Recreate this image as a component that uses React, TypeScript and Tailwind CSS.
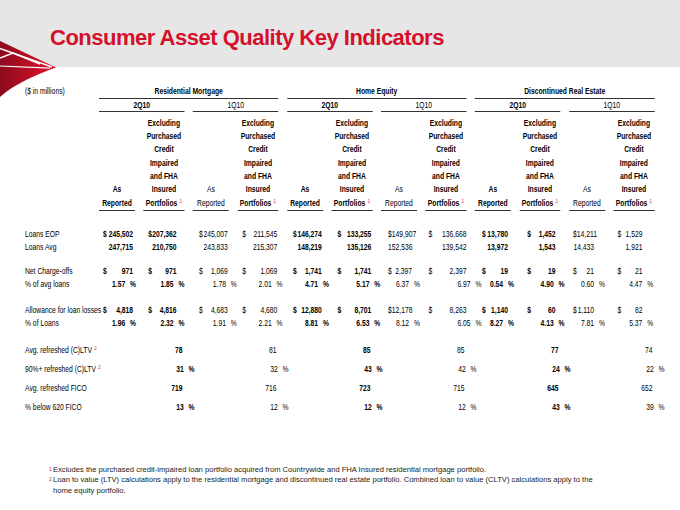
import React from "react";

const SANS = "font-['Liberation_Sans',Arial,sans-serif]";
// the slide uses a condensed face; the table block is squeezed horizontally to match,
// so every px below is in the un-squeezed space (page px × 4/3)
const GRID = "grid grid-cols-[87.33px_repeat(6,48px_54.67px)] gap-x-[11.33px]";

type Col = { pl: string; num: string; pct: string };

// per-column nudges so figures sit where the slide puts them
const COLS: Col[] = [
  { pl: "pl-[5.5px]", num: "pr-[2.5px]", pct: "mr-[-1.5px]" },
  { pl: "pl-[6.5px]", num: "pr-[10.5px]", pct: "mr-0" },
  { pl: "pl-[8px]", num: "pr-[1.5px]", pct: "mr-[-10.5px]" },
  { pl: "pl-[6.5px]", num: "pr-[1.5px]", pct: "mr-[-5.5px]" },
  { pl: "pl-[8px]", num: "pr-[1.5px]", pct: "mr-[-8px]" },
  { pl: "pl-[8px]", num: "pr-[1.5px]", pct: "mr-[-10.5px]" },
  { pl: "pl-[9.5px]", num: "pr-[6.5px]", pct: "mr-[-4px]" },
  { pl: "pl-[4px]", num: "pr-0", pct: "mr-[-20px]" },
  { pl: "pl-[9.5px]", num: "pr-[4px]", pct: "mr-[-4px]" },
  { pl: "pl-[10.5px]", num: "pr-[6.5px]", pct: "mr-[-5.5px]" },
  { pl: "pl-[5.5px]", num: "pr-[14.5px]", pct: "mr-0" },
  { pl: "pl-[5.5px]", num: "pr-[16px]", pct: "mr-[1.5px]" },
];

const isBold = (i: number) => i % 4 < 2;

type DataRow = { label: string; values: string[]; kind: "money" | "plain" | "pct" };

const SECTIONS: DataRow[][] = [
  [
    {
      label: "Loans EOP",
      kind: "money",
      values: ["245,502", "207,362", "245,007", "211,545", "146,274", "133,255", "149,907", "136,668", "13,780", "1,452", "14,211", "1,529"],
    },
    {
      label: "Loans Avg",
      kind: "plain",
      values: ["247,715", "210,750", "243,833", "215,307", "148,219", "135,126", "152,536", "139,542", "13,972", "1,543", "14,433", "1,921"],
    },
  ],
  [
    {
      label: "Net Charge-offs",
      kind: "money",
      values: ["971", "971", "1,069", "1,069", "1,741", "1,741", "2,397", "2,397", "19", "19", "21", "21"],
    },
    {
      label: "% of avg loans",
      kind: "pct",
      values: ["1.57", "1.85", "1.78", "2.01", "4.71", "5.17", "6.37", "6.97", "0.54", "4.90", "0.60", "4.47"],
    },
  ],
  [
    {
      label: "Allowance for loan losses",
      kind: "money",
      values: ["4,818", "4,816", "4,683", "4,680", "12,880", "8,701", "12,178", "8,263", "1,140", "60", "1,110", "82"],
    },
    {
      label: "% of Loans",
      kind: "pct",
      values: ["1.96", "2.32", "1.91", "2.21", "8.81", "6.53", "8.12", "6.05", "8.27", "4.13", "7.81", "5.37"],
    },
  ],
];

const STATS: { label: string; note?: string; pct: boolean; values: string[] }[] = [
  { label: "Avg. refreshed (C)LTV", note: "2", pct: false, values: ["78", "81", "85", "85", "77", "74"] },
  { label: "90%+ refreshed (C)LTV", note: "2", pct: true, values: ["31", "32", "43", "42", "24", "22"] },
  { label: "Avg. refreshed FICO", pct: false, values: ["719", "716", "723", "715", "645", "652"] },
  { label: "% below 620 FICO", pct: true, values: ["13", "12", "12", "12", "43", "39"] },
];

function Sup({ n }: { n: string }) {
  return <sup className="ml-[3px] text-[6px] font-normal text-[#e31837]">{n}</sup>;
}

function Logo() {
  return (
    <svg className="absolute left-0 top-0" width="60" height="100" viewBox="0 0 60 100">
      <defs>
        <linearGradient id="flag" x1="0" x2="1" y1="0" y2="0">
          <stop offset="0" stopColor="#8c0a1c" />
          <stop offset="1" stopColor="#e3132f" />
        </linearGradient>
      </defs>
      <path d="M0 41 L56 67.5 C38 74 14 84 0 97 Z" fill="url(#flag)" />
      <path d="M0 48.5 L52 67" stroke="#fff" strokeWidth="1.4" fill="none" />
      <path d="M0 58 L13 53 L40 64" stroke="#fff" strokeWidth="1.4" fill="none" />
      <path d="M0 66 L50 68.2" stroke="#fff" strokeWidth="1.2" fill="none" />
    </svg>
  );
}

function HeaderCell({ index }: { index: number }) {
  const excl = index % 2 === 1;
  const bold = excl || isBold(index);
  const lines = excl
    ? ["Excluding", "Purchased", "Credit", "Impaired", "and FHA", "Insured"]
    : ["As"];
  return (
    <div
      className={`flex flex-col items-center justify-end border-b border-[#333] text-center leading-[13.33px] ${
        bold ? "font-bold" : ""
      }`}
    >
      {lines.map((l) => (
        <div key={l} className="whitespace-nowrap">
          {l}
        </div>
      ))}
      <div className="whitespace-nowrap">
        {excl ? (
          <>
            Portfolios
            <Sup n="1" />
          </>
        ) : (
          "Reported"
        )}
      </div>
    </div>
  );
}

function ValueCell({ kind, value, index }: { kind: DataRow["kind"]; value: string; index: number }) {
  const col = COLS[index];
  const weight = isBold(index) ? "font-bold" : "";
  if (kind === "pct") {
    return (
      <div className="flex justify-end whitespace-nowrap">
        <span className={`${col.pct} ${weight}`}>
          {value}
          <span className="ml-[6.5px]">%</span>
        </span>
      </div>
    );
  }
  return (
    <div className={`flex justify-between whitespace-nowrap ${col.pl} ${col.num} ${weight}`}>
      <span>{kind === "money" ? "$" : ""}</span>
      <span>{value}</span>
    </div>
  );
}

export default function App() {
  return (
    <div className={`relative h-[510px] w-[680px] overflow-hidden bg-white text-black ${SANS}`}>
      <div className="h-[67px] bg-[#e6e6e6] pl-[50px] pt-[27px]">
        <h1 className="text-[22px] font-bold leading-[22px] tracking-[-0.5px] text-[#d4102b]">
          Consumer Asset Quality Key Indicators
        </h1>
      </div>
      <Logo />

      <div className="mt-[18px] w-[873px] origin-top-left scale-x-75 pl-[33.33px] text-[9px]">
        {/* group titles */}
        <div className={`${GRID} h-[14px] leading-[13px]`}>
          <div className="whitespace-nowrap">($ in millions)</div>
          {["Residential Mortgage", "Home Equity", "Discontinued Real Estate"].map((g) => (
            <div key={g} className="col-span-4 border-b border-[#333] text-center font-bold">
              {g}
            </div>
          ))}
        </div>

        {/* quarters */}
        <div className={`${GRID} h-[13px] leading-[12px]`}>
          <div />
          {[0, 1, 2, 3, 4, 5].map((q) => (
            <div
              key={q}
              className={`col-span-2 border-b border-[#333] text-center ${q % 2 === 0 ? "font-bold" : ""}`}
            >
              {q % 2 === 0 ? "2Q10" : "1Q10"}
            </div>
          ))}
        </div>

        {/* column headings */}
        <div className={`${GRID} h-[99px]`}>
          <div />
          {COLS.map((_, i) => (
            <HeaderCell key={i} index={i} />
          ))}
        </div>

        <div className="mt-[16.5px]">
          {SECTIONS.map((rows, s) => (
            <div key={s} className={s === 0 ? "" : s === 1 ? "mt-[10px]" : "mt-[13px]"}>
              {rows.map((row) => (
                <div
                  key={row.label}
                  className={`${GRID} ${s === 0 ? "h-[13.5px] leading-[13.5px]" : "h-[13px] leading-[13px]"}`}
                >
                  <div className="whitespace-nowrap">{row.label}</div>
                  {row.values.map((v, i) => (
                    <ValueCell key={i} kind={row.kind} value={v} index={i} />
                  ))}
                </div>
              ))}
            </div>
          ))}
        </div>

        <div className="mt-[11px]">
          {STATS.map((row) => (
            <div key={row.label} className={`${GRID} h-[19px] leading-[19px]`}>
              <div className="whitespace-nowrap">
                {row.label}
                {row.note && <Sup n={row.note} />}
              </div>
              {row.values.map((v, q) => (
                <div key={q} className="col-span-2 flex justify-end whitespace-nowrap">
                  <span className={`${row.pct ? "mr-[-13.5px]" : "pr-[2.5px]"} ${q % 2 === 0 ? "font-bold" : ""}`}>
                    {v}
                    {row.pct && <span className="ml-[6.5px]">%</span>}
                  </span>
                </div>
              ))}
            </div>
          ))}
        </div>
      </div>

      <div className="mt-[48px] pl-[49px] text-[7.6px] leading-[10.5px] text-[#1a1a1a]">
        <div className="flex">
          <span className="w-[4px] text-[5px] leading-[8px] text-[#e31837]">1</span>
          <span>
            Excludes the purchased credit-impaired loan portfolio acquired from Countrywide and FHA Insured
            residential mortgage portfolio.
          </span>
        </div>
        <div className="flex">
          <span className="w-[4px] text-[5px] leading-[8px] text-[#e31837]">2</span>
          <span>
            Loan to value (LTV) calculations apply to the residential mortgage and discontinued real estate
            portfolio. Combined loan to value (CLTV) calculations apply to the
            <br />
            home equity portfolio.
          </span>
        </div>
      </div>
    </div>
  );
}
